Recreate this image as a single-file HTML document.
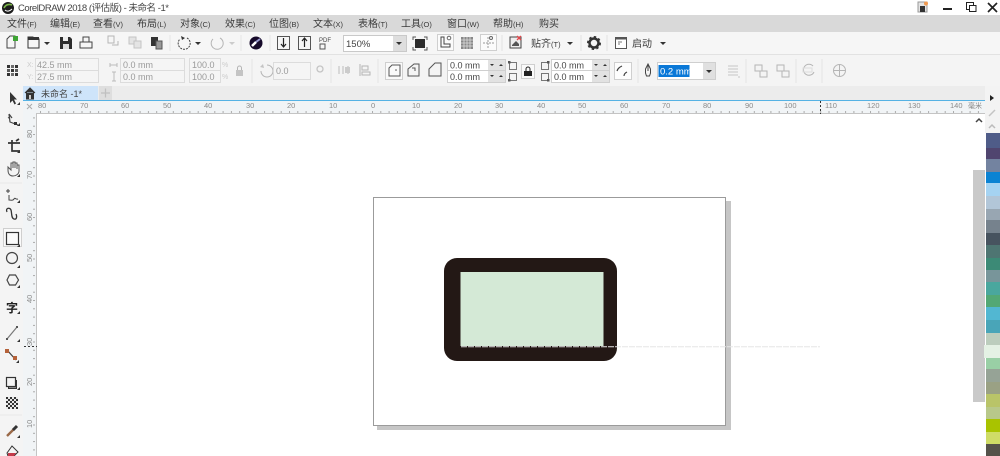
<!DOCTYPE html>
<html><head><meta charset="utf-8"><title>CorelDRAW</title>
<style>
html,body{margin:0;padding:0;background:#fff;width:1000px;height:456px;overflow:hidden}
svg{display:block;position:absolute;left:0;top:0;filter:blur(.35px)}
text{font-family:"Liberation Sans","Noto Sans CJK SC",sans-serif;fill:#333}
.m{font-size:10px;fill:#3a3a3a}
.m tspan{font-size:7.5px}
.f{font-size:9px;fill:#444}
.d{font-size:9px;fill:#9a9a9a}
.r{font-size:7.5px;fill:#8a8a8a}
.k{fill:#333}
.g{fill:none;stroke:#b5b5b5;stroke-width:1}
.s{fill:none;stroke:#444;stroke-width:1}
.bx{fill:#f5f5f5;stroke:#dcdcdc}
.wb{fill:#fff;stroke:#cfcfcf}
</style></head><body>
<svg width="1000" height="456" viewBox="0 0 1000 456" xmlns="http://www.w3.org/2000/svg" shape-rendering="geometricPrecision">
<defs>
<pattern id="ht" width="8.3" height="13" patternUnits="userSpaceOnUse" x="372" y="101"><rect x="0" y="10" width="1" height="2" fill="#aaa"/></pattern>
<pattern id="vt" width="13" height="8.3" patternUnits="userSpaceOnUse" x="23" y="134"><rect x="10" y="0" width="2" height="1" fill="#aaa"/></pattern>
<pattern id="ck" width="4" height="4" patternUnits="userSpaceOnUse" x="6" y="397"><rect width="4" height="4" fill="#e8e8e8"/><rect width="2" height="2" fill="#333"/><rect x="2" y="2" width="2" height="2" fill="#333"/></pattern>
</defs>
<rect width="1000" height="456" fill="#fff"/>
<!-- title -->
<circle cx="8" cy="8" r="6" fill="#1c1c1c"/><path d="M4 8c2-4 5-4 8-3" stroke="#7ab648" stroke-width="1.600" fill="none"/><path d="M5 10c2 2 5 1 7-1" stroke="#fff" stroke-width="1" fill="none"/>
<text x="18" y="11" textLength="151" style="font-size:9.500px;fill:#444">CorelDRAW 2018 (评估版) - 未命名 -1*</text>
<rect x="918" y="2" width="9" height="10" fill="#e4e4e4" stroke="#999"/><rect x="920" y="6" width="5" height="6" fill="#333"/><circle cx="926" cy="3.500" r="2" fill="#f09a50"/>
<rect x="943" y="8" width="9" height="2" fill="#222"/>
<rect x="966.500" y="2.500" width="7" height="7" fill="#fff" stroke="#222"/><rect x="969.500" y="5.500" width="6.500" height="6" fill="#fff" stroke="#222"/>
<path d="M988 3l9 9M997 3l-9 9" stroke="#222" stroke-width="1.700"/>
<!-- menu -->
<rect y="15" width="1000" height="17" fill="#d9d9d9"/>
<text class="m" x="7" y="27">文件<tspan>(F)</tspan></text><text class="m" x="50" y="27">编辑<tspan>(E)</tspan></text><text class="m" x="93" y="27">查看<tspan>(V)</tspan></text><text class="m" x="137" y="27">布局<tspan>(L)</tspan></text><text class="m" x="180" y="27">对象<tspan>(C)</tspan></text><text class="m" x="225" y="27">效果<tspan>(C)</tspan></text><text class="m" x="269" y="27">位图<tspan>(B)</tspan></text><text class="m" x="313" y="27">文本<tspan>(X)</tspan></text><text class="m" x="358" y="27">表格<tspan>(T)</tspan></text><text class="m" x="401" y="27">工具<tspan>(O)</tspan></text><text class="m" x="447" y="27">窗口<tspan>(W)</tspan></text><text class="m" x="493" y="27">帮助<tspan>(H)</tspan></text><text class="m" x="539" y="27">购买</text>
<!-- toolbar 1 -->
<rect y="32" width="1000" height="23" fill="#f6f6f6"/>
<line x1="0" x2="1000" y1="54.500" y2="54.500" stroke="#e2e2e2"/>
<path d="M7 48v-9l3-3h5v12z" class="s"/><rect x="13" y="36" width="5" height="5" fill="#3fa535"/>
<path d="M28 48V37h5l1 2h5v9z" fill="#f6f6f6" stroke="#333"/><rect x="28" y="37" width="11" height="3" fill="#333"/>
<path d="M44 42h6l-3 3z" class="k"/>
<path d="M60 37h10l2 2v10H60z" fill="#2d2d2d"/><rect x="63" y="37" width="5" height="4" fill="#eee"/><rect x="63" y="44" width="6" height="5" fill="#ddd"/>
<path d="M83 42v-5h6v5M80 42h12v6H80z" class="s"/>
<path d="M108 36h6v7h-6zM112 45h6v-4" class="g"/>
<rect x="129" y="37" width="7" height="7" fill="#e4e4e4" stroke="#c4c4c4"/><rect x="134" y="41" width="7" height="7" fill="#e4e4e4" stroke="#c4c4c4"/>
<rect x="151" y="37" width="7" height="9" fill="#333"/><rect x="156" y="41" width="6" height="8" fill="#999" stroke="#555"/>
<path d="M187 38a6 6 0 1 1-7 1" class="s" stroke-dasharray="2 1"/><path d="M181 36l1 4 3-2z" class="k"/>
<path d="M195 42h6l-3 3z" class="k"/>
<path d="M213 39a6 6 0 1 0 7-1" class="g"/><path d="M229 42h6l-3 3z" fill="#ccc"/>
<line x1="170" x2="170" y1="35" y2="51" stroke="#e6e6e6"/><line x1="241" x2="241" y1="35" y2="51" stroke="#e6e6e6"/><line x1="270" x2="270" y1="35" y2="51" stroke="#e6e6e6"/>
<circle cx="256" cy="43" r="6.500" fill="#160a2a"/><path d="M252 46l4-4" stroke="#fff" stroke-width="2.500"/><path d="M256 42l4-3" stroke="#9a9ad0" stroke-width="2"/>
<rect x="277.500" y="36.500" width="12" height="13" fill="#f6f6f6" stroke="#555"/><path d="M283.500 38v8M281 44l2.500 3 2.500-3" stroke="#222" fill="none" stroke-width="1.200"/>
<rect x="298.500" y="36.500" width="12" height="13" fill="#f6f6f6" stroke="#555"/><path d="M304.500 47v-8M302 41l2.500-3 2.500 3" stroke="#222" fill="none" stroke-width="1.200"/>
<text x="319" y="42" style="font-size:6px;fill:#444">PDF</text><rect x="320" y="44" width="5" height="5" fill="none" stroke="#555"/>
<rect x="343.500" y="35.500" width="63" height="16" fill="#fff" stroke="#c9c9c9"/><rect x="393" y="36" width="13" height="15" fill="#dedede"/><path d="M396 42h6l-3 3z" class="k"/>
<text x="346" y="47" style="font-size:9.500px;fill:#444">150%</text>
<rect x="415" y="39" width="10" height="9" fill="#2c2c2c"/><path d="M413 40v-3h3M424 37h3v3M427 47v3h-3M416 50h-3v-3" stroke="#555" fill="none"/>
<rect x="437.500" y="34.500" width="16" height="16" fill="#fbfbfb" stroke="#cfcfcf"/><path d="M441 37v10h9v-3h-6v-7z" fill="none" stroke="#444"/><circle cx="449" cy="38" r="1.800" fill="none" stroke="#666"/>
<rect x="461" y="37" width="12" height="12" fill="#888"/><path d="M461 40h12M461 43h12M461 46h12M464 37v12M467 37v12M470 37v12" stroke="#ddd" stroke-width=".8"/>
<rect x="480.500" y="34.500" width="16" height="16" fill="#fbfbfb" stroke="#cfcfcf"/><path d="M488 37v11M483 43h11" stroke="#999" stroke-dasharray="2 1"/><circle cx="491" cy="38" r="1.500" fill="none" stroke="#666"/>
<line x1="502" x2="502" y1="35" y2="51" stroke="#e2e2e2"/>
<rect x="510" y="37" width="11" height="11" fill="#eee" stroke="#444"/><path d="M512 45l4-4 3 3v2h-7z" fill="#555"/><path d="M517 36l4 4M521 36l-4 4" stroke="#e2474b" stroke-width="1.300"/>
<text x="531" y="47" class="m">贴齐<tspan>(T)</tspan></text><path d="M567 42h6l-3 3z" class="k"/>
<line x1="581" x2="581" y1="35" y2="51" stroke="#e2e2e2"/>
<circle cx="594" cy="43" r="4.500" fill="none" stroke="#333" stroke-width="2.500"/><circle cx="594" cy="43" r="6.200" fill="none" stroke="#333" stroke-width="1.600" stroke-dasharray="2.400 2.400"/>
<line x1="607" x2="607" y1="35" y2="51" stroke="#e2e2e2"/>
<rect x="615.500" y="37.500" width="11" height="11" fill="#fff" stroke="#555"/><rect x="615.500" y="37.500" width="11" height="2" fill="#555"/><path d="M618 42h4M618 44h2" stroke="#777"/>
<text x="632" y="47" class="m">启动</text><path d="M660 42h6l-3 3z" class="k"/>
<!-- property bar -->
<rect y="55" width="1000" height="31" fill="#f4f4f4"/>
<g fill="#333"><rect x="7" y="65" width="3" height="3"/><rect x="11" y="65" width="3" height="3" opacity=".7"/><rect x="15" y="65" width="3" height="3"/><rect x="7" y="69" width="3" height="3" opacity=".8"/><rect x="11" y="69" width="3" height="3"/><rect x="15" y="69" width="3" height="3" opacity=".8"/><rect x="7" y="73" width="3" height="3"/><rect x="11" y="73" width="3" height="3" opacity=".7"/><rect x="15" y="73" width="3" height="3"/></g>
<text x="27" y="67" style="font-size:7px;fill:#ccc">X:</text><text x="27" y="79" style="font-size:7px;fill:#ccc">Y:</text>
<rect x="35.500" y="58.500" width="63" height="12" class="bx"/><rect x="35.500" y="70.500" width="63" height="12" class="bx"/>
<text x="37" y="68" class="d">42.5 mm</text><text x="37" y="80" class="d">27.5 mm</text>
<path d="M110 65h7M110 63v4M117 63v4M114 72v9M112 72h4M112 81h4" stroke="#bbb" fill="none"/>
<rect x="120.500" y="58.500" width="64" height="12" class="bx"/><rect x="120.500" y="70.500" width="64" height="12" class="bx"/>
<text x="123" y="68" class="d">0.0 mm</text><text x="123" y="80" class="d">0.0 mm</text>
<rect x="189.500" y="58.500" width="31" height="12" class="bx"/><rect x="189.500" y="70.500" width="31" height="12" class="bx"/>
<text x="192" y="68" class="d">100.0</text><text x="192" y="80" class="d">100.0</text>
<text x="222" y="67" style="font-size:7px;fill:#ccc">%</text><text x="222" y="79" style="font-size:7px;fill:#ccc">%</text>
<rect x="236" y="70" width="7" height="6" fill="#c4c4c4"/><path d="M237.500 70v-2a2 2 0 0 1 4 0v2" class="g"/>
<line x1="252" x2="252" y1="59" y2="83" stroke="#e4e4e4"/>
<path d="M267 65a6 6 0 1 1-6 6" class="g"/><path d="M260 67l3-3 1 4z" fill="#c4c4c4"/>
<rect x="273.500" y="62.500" width="37" height="17" class="bx"/><text x="276" y="74" class="d">0.0</text>
<circle cx="320" cy="69" r="3" fill="none" stroke="#c4c4c4" stroke-width="1.300"/>
<line x1="331" x2="331" y1="59" y2="83" stroke="#e4e4e4"/>
<path d="M339 66v8M343 66v8M348 66v8" stroke="#bbb"/><rect x="345" y="67" width="5" height="6" fill="#ccc"/>
<path d="M360 64v12M362 66h6v4h-6zM362 72h8v3h-8z" class="g"/>
<line x1="378" x2="378" y1="59" y2="83" stroke="#e4e4e4"/>
<rect x="385.500" y="62.500" width="17" height="17" fill="#fafafa" stroke="#cfcfcf"/>
<path d="M389 76v-8l3-3h8v11z" fill="none" stroke="#555"/><circle cx="396" cy="70" r=".8" fill="#555"/>
<path d="M408 76v-7l6-5h5v12z" fill="none" stroke="#555"/><path d="M412 68h3v3" stroke="#555" fill="none"/>
<path d="M429 76v-7l6-6h6v13z" fill="none" stroke="#555"/>
<rect x="447.500" y="59.500" width="58" height="11" class="wb"/><rect x="447.500" y="70.500" width="58" height="12" class="wb"/>
<rect x="488" y="60" width="17" height="22" fill="#e2e2e2"/><line x1="488" x2="505" y1="70.500" y2="70.500" stroke="#cfcfcf"/>
<text x="450" y="68.500" class="f">0.0 mm</text><text x="450" y="80" class="f">0.0 mm</text>
<path d="M490 64h4l-2 2zM499 66h4l-2-2zM490 75h4l-2 2zM499 77h4l-2-2z" class="k"/>
<rect x="509.500" y="62.500" width="7" height="7" fill="none" stroke="#777"/><rect x="509.500" y="73.500" width="7" height="7" fill="none" stroke="#777"/><rect x="508" y="61" width="2.500" height="2.500" fill="#555"/><rect x="508" y="79" width="2.500" height="2.500" fill="#555"/>
<rect x="521.500" y="64.500" width="13" height="14" fill="#fafafa" stroke="#cfcfcf"/><rect x="524" y="71" width="8" height="5" fill="#222"/><path d="M526 71v-2a2 2 0 0 1 4 0v2" stroke="#222" fill="none"/>
<rect x="541.500" y="62.500" width="7" height="7" fill="none" stroke="#777"/><rect x="541.500" y="73.500" width="7" height="7" fill="none" stroke="#777"/><rect x="547" y="61" width="2.500" height="2.500" fill="#555"/><rect x="547" y="79" width="2.500" height="2.500" fill="#555"/>
<rect x="551.500" y="59.500" width="58" height="11" class="wb"/><rect x="551.500" y="70.500" width="58" height="12" class="wb"/>
<rect x="592" y="60" width="17" height="22" fill="#e2e2e2"/><line x1="592" x2="609" y1="70.500" y2="70.500" stroke="#cfcfcf"/>
<text x="554" y="68.500" class="f">0.0 mm</text><text x="554" y="80" class="f">0.0 mm</text>
<path d="M594 64h4l-2 2zM603 66h4l-2-2zM594 75h4l-2 2zM603 77h4l-2-2z" class="k"/>
<rect x="614.500" y="62.500" width="17" height="17" fill="#fdfdfd" stroke="#cfcfcf"/><path d="M617 71c1-3 3-4 5-5M624 76c0-2 1-3 3-4" stroke="#444" fill="none" stroke-width="1.200"/>
<line x1="638" x2="638" y1="59" y2="83" stroke="#e4e4e4"/>
<path d="M648 64l2.500 5v4l-1 3h-3l-1-3v-4z" fill="none" stroke="#444"/><path d="M648 64v7" stroke="#444"/>
<rect x="657.500" y="62.500" width="58" height="17" fill="#fff" stroke="#cfcfcf"/><rect x="658.500" y="65" width="31" height="12" fill="#0a78d7"/><rect x="703" y="63" width="12" height="16" fill="#e0e0e0"/><path d="M706 70h6l-3 3z" class="k"/>
<text x="660" y="74.500" style="font-size:9.500px;fill:#fff">0.2 mm</text>
<line x1="746" x2="746" y1="59" y2="83" stroke="#e4e4e4"/><line x1="796" x2="796" y1="59" y2="83" stroke="#e4e4e4"/><line x1="822" x2="822" y1="59" y2="83" stroke="#e4e4e4"/>
<path d="M728 66h10M728 69h10M728 72h10M728 75h10M738 77h2" stroke="#c6c6c6"/>
<rect x="755" y="65" width="7" height="6" class="g"/><rect x="760" y="71" width="7" height="6" class="g"/>
<rect x="777" y="65" width="7" height="6" class="g"/><rect x="782" y="71" width="7" height="6" class="g"/>
<path d="M813 66a5.500 5.500 0 1 0 1 6" class="g"/><rect x="803" y="68" width="9" height="4" fill="none" stroke="#ddd"/>
<circle cx="839.500" cy="70.500" r="6" class="g"/><path d="M833.500 70.500h12M839.500 64.500v12" stroke="#b5b5b5"/>
<!-- tab bar -->
<rect y="86" width="1000" height="15" fill="#ececec"/>
<rect x="23" y="86" width="75" height="14" fill="#cee4fa"/>
<rect x="99" y="86" width="13" height="14" fill="#dedede"/><path d="M101 93h9M105.500 88.500v9" stroke="#c0c0c0" stroke-width="1.300"/>
<path d="M25 93l5-5 5 5M26.500 92v7h7v-7z" fill="#333" stroke="#333"/><rect x="29" y="95" width="2" height="4" fill="#ccc"/>
<text x="41" y="97" style="font-size:9px;fill:#444">未命名 -1*</text>
<!-- rulers -->
<rect x="23" y="101" width="962" height="13" fill="#f1f4f6"/>
<rect x="36" y="101" width="949" height="13" fill="url(#ht)"/>
<rect x="23" y="100" width="962" height="1" fill="#55b2e4"/>
<line x1="36" x2="985" y1="113.500" y2="113.500" stroke="#c4c4c4"/>
<rect x="23" y="101" width="14" height="355" fill="#f1f4f6"/>
<rect x="23" y="114" width="14" height="342" fill="url(#vt)"/>
<line x1="36.500" x2="36.500" y1="113" y2="456" stroke="#c4c4c4"/>
<path d="M27 104l5 5M27 109l5-5" stroke="#aaa"/>
<text class="r" x="38" y="108">80</text><text class="r" x="80" y="108">70</text><text class="r" x="121" y="108">60</text><text class="r" x="163" y="108">50</text><text class="r" x="204" y="108">40</text><text class="r" x="246" y="108">30</text><text class="r" x="287" y="108">20</text><text class="r" x="329" y="108">10</text><text class="r" x="371" y="108">0</text><text class="r" x="412" y="108">10</text><text class="r" x="454" y="108">20</text><text class="r" x="495" y="108">30</text><text class="r" x="537" y="108">40</text><text class="r" x="578" y="108">50</text><text class="r" x="620" y="108">60</text><text class="r" x="662" y="108">70</text><text class="r" x="703" y="108">80</text><text class="r" x="745" y="108">90</text><text class="r" x="784" y="108">100</text><text class="r" x="825" y="108">110</text><text class="r" x="867" y="108">120</text><text class="r" x="908" y="108">130</text><text class="r" x="950" y="108">140</text>
<text x="968" y="108" style="font-size:7px;fill:#888">毫米</text>
<path d="M820.500 101v13" stroke="#333" stroke-dasharray="2 2"/>
<text class="r" transform="translate(32,138) rotate(-90)">80</text><text class="r" transform="translate(32,179) rotate(-90)">70</text><text class="r" transform="translate(32,221) rotate(-90)">60</text><text class="r" transform="translate(32,262) rotate(-90)">50</text><text class="r" transform="translate(32,303) rotate(-90)">40</text><text class="r" transform="translate(32,346) rotate(-90)">30</text><text class="r" transform="translate(32,386) rotate(-90)">20</text><text class="r" transform="translate(32,428) rotate(-90)">10</text>
<path d="M24 346.500h13" stroke="#333" stroke-dasharray="2 2"/>
<!-- left toolbox -->
<rect y="86" width="23" height="370" fill="#f4f4f4"/>
<path d="M10 92v11l2.500-2.500 2 4 1.500-1-2-4h3z" fill="#333"/><path d="M17 105l3-3v3z" class="k"/>
<path d="M9 114l1 8 8 3M9 114l3 4M8 118l2-1" fill="none" stroke="#444" stroke-width="1.200"/><rect x="14" y="122" width="3" height="3" fill="#333"/><path d="M17 126l3-3v3z" class="k"/>
<path d="M8 143h12M12 140v11h8M16 141l3-2" fill="none" stroke="#333" stroke-width="1.700"/><path d="M17 153l3-3v3z" class="k"/>
<path d="M8 167v3c0 4 2 6 5 6s6-2 6-5v-6h-2v4-6h-2v5-6h-2v6-5h-2v7z" fill="#f4f4f4" stroke="#555"/><path d="M17 177l3-3v3z" class="k"/>
<line x1="0" x2="22" y1="183" y2="183" stroke="#e8e8e8"/>
<path d="M6 191h4M8 189v4M9 195v5c2 0 4 1 5-1s2 1 4 0" fill="none" stroke="#444"/><path d="M17 203l3-3v3z" class="k"/>
<path d="M7 212c-2-4 3-5 4-2s0 8 3 9 3-3 2-5" fill="none" stroke="#333" stroke-width="1.300"/>
<rect x="3.500" y="228.500" width="18" height="18" fill="#fafafa" stroke="#cfcfcf"/><rect x="6.500" y="232.500" width="12" height="12" fill="#fafafa" stroke="#333" stroke-width="1.200"/><path d="M17 247l3-3v3z" class="k"/>
<circle cx="12" cy="258" r="5.500" fill="none" stroke="#444" stroke-width="1.200"/><path d="M17 268l3-3v3z" class="k"/>
<path d="M7 280l2.500-5h6l3 5-3 5h-6z" fill="none" stroke="#444" stroke-width="1.200"/><path d="M17 288l3-3v3z" class="k"/>
<text x="6" y="312" style="font-size:12px;font-weight:700;fill:#222">字</text><path d="M17 314l3-3v3z" class="k"/>
<path d="M7 339l10-12" stroke="#777" stroke-width="1.200"/><rect x="6" y="338" width="2" height="2" fill="#555"/><rect x="16" y="326" width="2" height="2" fill="#555"/><path d="M17 342l3-3v3z" class="k"/>
<path d="M7 350l9 10" stroke="#444" stroke-width="1.300"/><rect x="5" y="349" width="4" height="4" fill="#b5623a"/><rect x="13" y="356" width="4" height="4" fill="#b5623a"/><path d="M16 363l3-3v3z" class="k"/>
<rect x="8.500" y="380.500" width="8" height="8" fill="#8f8f8f" stroke="#333"/><rect x="6.500" y="377.500" width="9" height="9" fill="#f4f4f4" stroke="#333" stroke-width="1.200"/><path d="M17 390l3-3v3z" class="k"/>
<rect x="6" y="397" width="12" height="12" fill="url(#ck)"/>
<line x1="0" x2="22" y1="415" y2="415" stroke="#e8e8e8"/>
<path d="M7 436l7-7" stroke="#9a6a48" stroke-width="2.400"/><path d="M13 430l4-4" stroke="#333" stroke-width="3"/><path d="M17 438l3-3v3z" class="k"/>
<path d="M7 453l5-7 6 6-4 4H8z" fill="#f4f4f4" stroke="#333"/><path d="M8 453h8l-2 3H8z" fill="#c43a4a"/>
<!-- page -->
<rect x="377" y="201" width="354" height="229" fill="#c6c6c6"/>
<rect x="373.500" y="197.500" width="352" height="228" fill="#fff" stroke="#9b9b9b"/>
<rect x="444" y="258" width="173" height="103" rx="13" fill="#231815"/>
<rect x="460.500" y="272" width="143" height="74" fill="#d4e9d6"/>
<path d="M461 346.700H820" stroke="#e6e6e6" stroke-dasharray="6 1" stroke-width="1"/>
<!-- scrollbar -->
<rect x="973" y="170" width="12" height="232" fill="#c9c9c9"/>
<path d="M976 122l3-3 3 3" fill="none" stroke="#444" stroke-width="1.500"/>
<!-- right column -->
<rect x="985" y="86" width="15" height="47" fill="#f3f3f3"/>
<path d="M990 95l4 3-4 3z" fill="#222"/>
<path d="M989 116l6-6" stroke="#c4c4c4" stroke-width="1.500"/>
<path d="M989 128l3-3 3 3" fill="none" stroke="#bbb" stroke-width="1.500"/>
<rect x="986" y="133" width="14" height="15" fill="#4f5c88"/>
<rect x="986" y="148" width="14" height="11" fill="#50456f"/>
<rect x="986" y="159" width="14" height="13" fill="#7383a0"/>
<rect x="986" y="172" width="14" height="11" fill="#0b83d3"/>
<rect x="986" y="183" width="14" height="13" fill="#a5d3f2"/>
<rect x="986" y="196" width="14" height="13" fill="#b2c6d8"/>
<rect x="986" y="209" width="14" height="11" fill="#98a6b2"/>
<rect x="986" y="220" width="14" height="13" fill="#76828d"/>
<rect x="986" y="233" width="14" height="12" fill="#47535f"/>
<rect x="986" y="245" width="14" height="13" fill="#4e7572"/>
<rect x="986" y="258" width="14" height="12" fill="#3c8a76"/>
<rect x="986" y="270" width="14" height="12" fill="#78959a"/>
<rect x="986" y="282" width="14" height="13" fill="#4aa79e"/>
<rect x="986" y="295" width="14" height="12" fill="#53a875"/>
<rect x="986" y="307" width="14" height="13" fill="#52b7d2"/>
<rect x="986" y="320" width="14" height="13" fill="#49a5b8"/>
<rect x="986" y="333" width="14" height="12" fill="#bccdbd"/>
<rect x="984" y="345" width="16" height="13" fill="#e4f1e4"/>
<rect x="986" y="358" width="14" height="11" fill="#99cfa5"/>
<rect x="986" y="369" width="14" height="13" fill="#96a396"/>
<rect x="986" y="382" width="14" height="12" fill="#9aa184"/>
<rect x="986" y="394" width="14" height="13" fill="#b9c468"/>
<rect x="986" y="407" width="14" height="12" fill="#b8c88a"/>
<rect x="986" y="419" width="14" height="13" fill="#a9c300"/>
<rect x="986" y="432" width="14" height="12" fill="#cfdc66"/>
<rect x="986" y="444" width="14" height="12" fill="#55524a"/>
</svg>
</body></html>
